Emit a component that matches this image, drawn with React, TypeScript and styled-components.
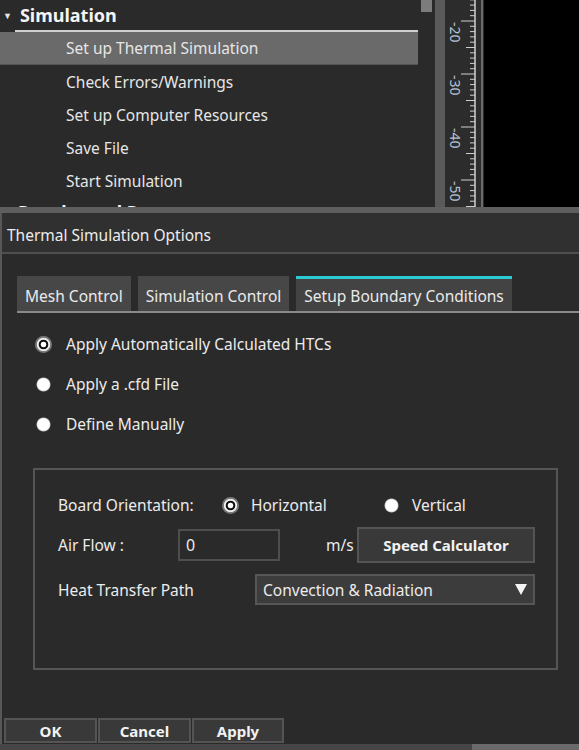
import React from 'react';
import styled, { createGlobalStyle } from 'styled-components';

const GlobalStyle = createGlobalStyle`
    html, body {
        margin: 0;
        padding: 0;
        background: #2a2a2a;
    }
    body {
        font-family: "Noto Sans", "Open Sans", sans-serif;
    }
`;

const Frame = styled.div`
    width: 579px;
    height: 750px;
    display: flex;
    flex-direction: column;
    overflow: hidden;
    background: #2a2a2a;
    color: #e8e8e8;
    font-size: 15.5px;
`;

// --- upper area: tree + ruler + canvas ---

const TopArea = styled.div`
    height: 207px;
    display: flex;
    overflow: hidden;
    flex-shrink: 0;
`;

const TreePanel = styled.div`
    width: 421px;
    display: flex;
    flex-direction: column;
    padding-right: 3px;
    box-sizing: border-box;
`;

const TreeHeading = styled.div`
    height: 30px;
    display: flex;
    align-items: center;
    gap: 8px;
    padding-left: 3px;
    font-size: 18px;
    font-weight: 700;
    color: #f4f4f4;
    flex-shrink: 0;
    white-space: nowrap;
`;

const Caret = styled.span`
    font-size: 9px;
    color: #e6e6e6;
`;

const HeadingRule = styled.div`
    height: 2px;
    margin-left: 15px;
    background: #cfcfcf;
    flex-shrink: 0;
`;

const TreeItem = styled.div<{ $selected?: boolean }>`
    height: 33px;
    flex-shrink: 0;
    display: flex;
    align-items: center;
    padding-left: 66px;
    color: #e6e6e6;
    background: ${p => (p.$selected ? '#6a6a6a' : 'transparent')};
    border-bottom: ${p => (p.$selected ? '1px solid #555' : 'none')};
    box-sizing: border-box;
`;

const Scrollbar = styled.div`
    width: 14px;
    display: flex;
    flex-direction: column;
    align-items: flex-start;
`;

const ScrollThumb = styled.div`
    width: 11px;
    height: 12px;
    background: #7c7c7c;
`;

const Splitter = styled.div`
    width: 10px;
    background: #5a5a5a;
`;

const RulerBox = styled.div`
    width: 39px;
    background: #2c2c2c;
`;

const Canvas = styled.div`
    flex: 1;
    background: #000;
`;

const Divider = styled.div`
    height: 6px;
    background: #5e5e5e;
    flex-shrink: 0;
`;

// --- dialog ---

const Dialog = styled.div`
    flex: 1;
    display: flex;
    flex-direction: column;
    border-left: 2px solid #575757;
    min-height: 0;
`;

const TitleBar = styled.div`
    height: 41px;
    box-sizing: border-box;
    display: flex;
    align-items: center;
    padding: 5px 0 0 5px;
    background: #303030;
    border-bottom: 2px solid #4f4f4f;
    color: #ececec;
    flex-shrink: 0;
`;

const Content = styled.div`
    flex: 1;
    padding-top: 22px;
    display: flex;
    flex-direction: column;
`;

const TabBar = styled.div`
    display: flex;
    gap: 7px;
    margin-left: 15px;
    border-bottom: 2px solid #8a8a8a;
`;

const Tab = styled.div<{ $active?: boolean }>`
    height: 35px;
    box-sizing: border-box;
    display: flex;
    align-items: center;
    justify-content: center;
    padding: 1px 8px 0;
    background: ${p => (p.$active ? '#434343' : '#474747')};
    border-top: 3px solid ${p => (p.$active ? '#2ccbd4' : '#474747')};
    color: #eaeaea;
`;

const RadioList = styled.div`
    display: flex;
    flex-direction: column;
    margin: 11px 0 0 33px;
`;

const RadioRow = styled.label`
    height: 40px;
    display: flex;
    align-items: center;
    gap: 14px;
    color: #ececec;
`;

const Radio = styled.span<{ $checked?: boolean }>`
    width: 17px;
    height: 17px;
    border-radius: 50%;
    flex-shrink: 0;
    background: ${p =>
        p.$checked
            ? 'radial-gradient(circle, #ffffff 0 2.4px, #111 3.2px 4.4px, #f2f2f2 5.2px 6.2px, #7a7a7a 7px 8.5px)'
            : 'radial-gradient(circle, #ffffff 0 5.6px, #d8d8d8 6.4px, rgba(255,255,255,0) 7.4px)'};
`;

const GroupBox = styled.div`
    height: 202px;
    box-sizing: border-box;
    margin: 24px 21px 0 31px;
    border: 2px solid #555;
    padding: 20px 0 0 23px;
    display: flex;
    flex-direction: column;
`;

const FieldRow = styled.div<{ $height: number; $top?: number }>`
    height: ${p => p.$height}px;
    margin-top: ${p => p.$top || 0}px;
    display: flex;
    align-items: center;
    color: #ececec;
`;

const FieldLabel = styled.span<{ $width: number }>`
    width: ${p => p.$width}px;
    flex-shrink: 0;
`;

const Option = styled.span<{ $width?: number }>`
    display: flex;
    align-items: center;
    gap: 12px;
    width: ${p => (p.$width ? `${p.$width}px` : 'auto')};
`;

const NumberBox = styled.div`
    width: 102px;
    height: 32px;
    box-sizing: border-box;
    border: 2px solid #4e4e4e;
    background: #2a2a2a;
    display: flex;
    align-items: center;
    padding-left: 6px;
    font-size: 16px;
`;

const Unit = styled.span`
    width: 77px;
    padding-left: 46px;
    box-sizing: border-box;
`;

const ActionButton = styled.div<{ $width: number; $height: number }>`
    width: ${p => p.$width}px;
    height: ${p => p.$height}px;
    box-sizing: border-box;
    display: flex;
    align-items: center;
    justify-content: center;
    background: #393939;
    border: 2px solid #545454;
    font-size: 15px;
    font-weight: 700;
    color: #f2f2f2;
    flex-shrink: 0;
`;

const Select = styled.div`
    width: 280px;
    height: 31px;
    box-sizing: border-box;
    background: #3c3c3c;
    border: 2px solid #565656;
    display: flex;
    align-items: center;
    justify-content: space-between;
    padding: 0 6px 0 6px;
`;

const DropArrow = styled.span`
    width: 0;
    height: 0;
    border-left: 6px solid transparent;
    border-right: 6px solid transparent;
    border-top: 11px solid #f4f4f4;
`;

const Footer = styled.div`
    display: flex;
    gap: 1px;
    padding-left: 2px;
    margin-bottom: 1px;
    flex-shrink: 0;
`;

const BottomStrip = styled.div`
    height: 6px;
    display: flex;
    flex-shrink: 0;
    margin-left: -2px;
`;

const StripPart = styled.div<{ $light?: boolean }>`
    height: 100%;
    flex: ${p => (p.$light ? 1 : '0 0 472px')};
    background: ${p => (p.$light ? '#6a6a6a' : '#464646')};
`;

const Ruler: React.FC = () => {
    const ticks = [];
    for (let i = -4; i < 36; i++) {
        const y = 21 + i * 5.3;
        const len = i % 10 === 0 ? 14 : i % 5 === 0 ? 9 : 5;
        ticks.push(<line key={i} x1={30 - len} y1={y} x2={30} y2={y} stroke="#cfcfcf" strokeWidth={1} />);
    }
    const labels = ['-20', '-30', '-40', '-50'];
    return (
        <svg width="39" height="207" viewBox="0 0 39 207">
            {ticks}
            <line x1="30" y1="0" x2="30" y2="207" stroke="#d0d0d0" strokeWidth={1.5} />
            <line x1="37" y1="0" x2="37" y2="207" stroke="#6a6a6a" strokeWidth={2} />
            {labels.map((t, k) => {
                const y = 22 + k * 53;
                return (
                    <text
                        key={t}
                        x={5}
                        y={y}
                        transform={`rotate(90 5 ${y})`}
                        fontSize="14"
                        fill="#b4c2d4"
                        fontFamily='"Noto Sans", sans-serif'
                    >
                        {t}
                    </text>
                );
            })}
        </svg>
    );
};

const treeItems = [
    'Set up Thermal Simulation',
    'Check Errors/Warnings',
    'Set up Computer Resources',
    'Save File',
    'Start Simulation',
];

const App: React.FC = () => {
    return (
        <Frame>
            <GlobalStyle />
            <TopArea>
                <TreePanel>
                    <TreeHeading>
                        <Caret>▼</Caret>Simulation
                    </TreeHeading>
                    <HeadingRule />
                    {treeItems.map((t, i) => (
                        <TreeItem key={t} $selected={i === 0}>
                            {t}
                        </TreeItem>
                    ))}
                    <TreeHeading>
                        <Caret>▶</Caret>Results and Reports
                    </TreeHeading>
                </TreePanel>
                <Scrollbar>
                    <ScrollThumb />
                </Scrollbar>
                <Splitter />
                <RulerBox>
                    <Ruler />
                </RulerBox>
                <Canvas />
            </TopArea>
            <Divider />
            <Dialog>
                <TitleBar>Thermal Simulation Options</TitleBar>
                <Content>
                    <TabBar>
                        <Tab>Mesh Control</Tab>
                        <Tab>Simulation Control</Tab>
                        <Tab $active>Setup Boundary Conditions</Tab>
                    </TabBar>
                    <RadioList>
                        <RadioRow>
                            <Radio $checked />
                            Apply Automatically Calculated HTCs
                        </RadioRow>
                        <RadioRow>
                            <Radio />
                            Apply a .cfd File
                        </RadioRow>
                        <RadioRow>
                            <Radio />
                            Define Manually
                        </RadioRow>
                    </RadioList>
                    <GroupBox>
                        <FieldRow $height={30}>
                            <FieldLabel $width={164}>Board Orientation:</FieldLabel>
                            <Option $width={161}>
                                <Radio $checked />
                                Horizontal
                            </Option>
                            <Option>
                                <Radio />
                                Vertical
                            </Option>
                        </FieldRow>
                        <FieldRow $height={36} $top={7}>
                            <FieldLabel $width={120}>Air Flow :</FieldLabel>
                            <NumberBox>0</NumberBox>
                            <Unit>m/s</Unit>
                            <ActionButton $width={178} $height={36}>
                                Speed Calculator
                            </ActionButton>
                        </FieldRow>
                        <FieldRow $height={31} $top={11}>
                            <FieldLabel $width={197}>Heat Transfer Path</FieldLabel>
                            <Select>
                                <span>Convection &amp; Radiation</span>
                                <DropArrow />
                            </Select>
                        </FieldRow>
                    </GroupBox>
                </Content>
                <Footer>
                    <ActionButton $width={93} $height={25}>OK</ActionButton>
                    <ActionButton $width={93} $height={25}>Cancel</ActionButton>
                    <ActionButton $width={92} $height={25}>Apply</ActionButton>
                </Footer>
                <BottomStrip>
                    <StripPart />
                    <StripPart $light />
                </BottomStrip>
            </Dialog>
        </Frame>
    );
};

export default App;
